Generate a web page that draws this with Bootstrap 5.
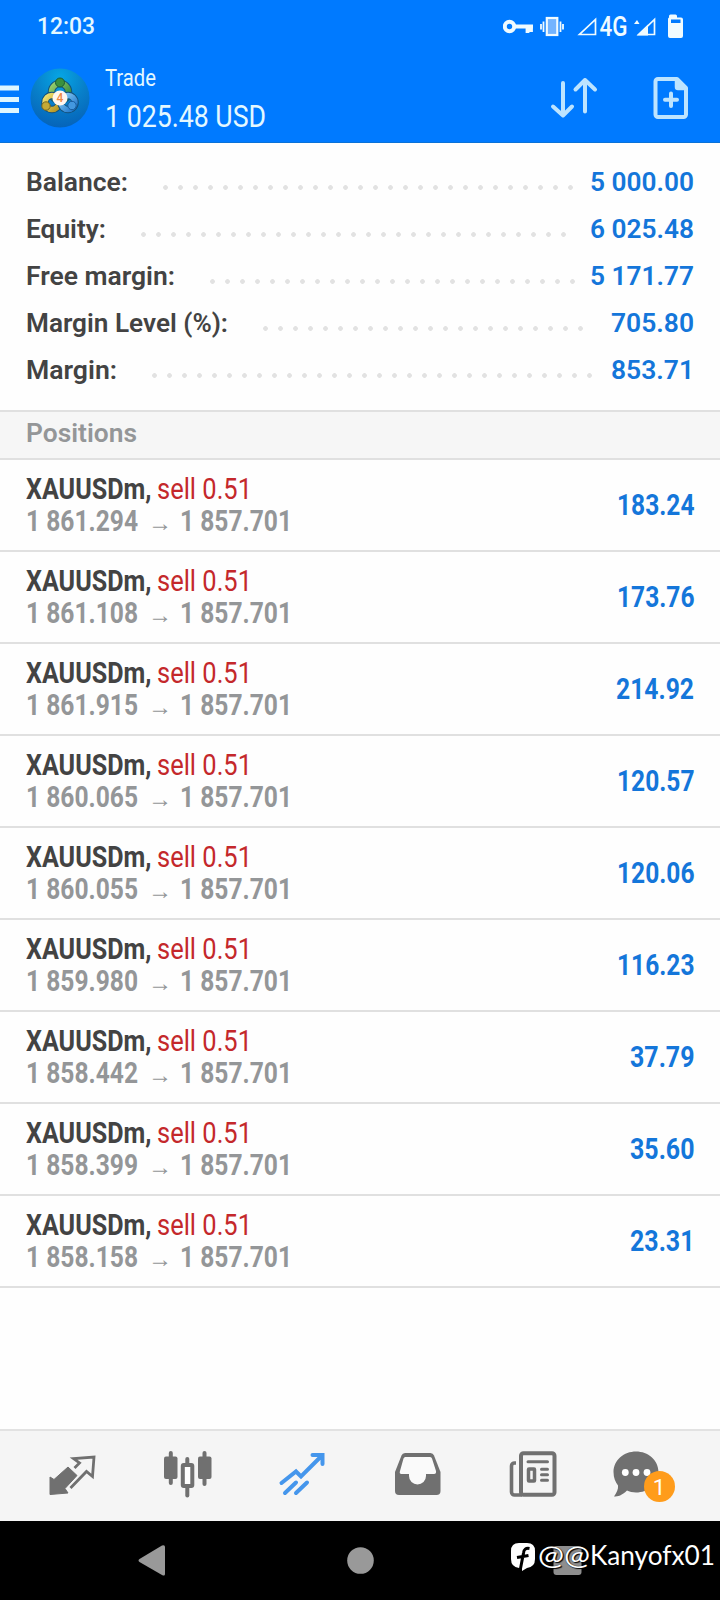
<!DOCTYPE html>
<html lang="en">
<head>
<meta charset="utf-8">
<meta name="viewport" content="width=device-width, initial-scale=1">
<title>Trade</title>
<link href="https://cdn.jsdelivr.net/npm/bootstrap@5.3.0/dist/css/bootstrap.min.css" rel="stylesheet">
<style>
body{font-family:Roboto,sans-serif;background:#fefefe;color:#434343;width:720px;height:1600px;overflow:hidden}
svg{display:block;flex:none}
.top-area{background:#007aff;color:#e4f8ff;height:143px;border-bottom:1px solid #0a72d8}
.status{height:54px}
.clock{font-size:23px;line-height:56px;font-weight:500;margin-left:37px}
.appbar{height:88px}
.fit{display:inline-block;white-space:pre;vertical-align:top}
.fit>span{display:inline-block;transform-origin:0 50%}
.t-title{font-size:24px;line-height:32px;margin-top:7.5px}
.t-sum{font-size:32px;line-height:38px;margin-top:3px}
.summary{padding:16px 26px 0;height:267px}
.summary .line{height:47px;line-height:47px;font-size:26px;font-weight:600}
.blue{color:#1476da}
.dots{height:5px;margin-left:30px;margin-top:10px;background:radial-gradient(circle at 7.5px 2.5px,#e2e2e2 0 2px,transparent 2.7px) 0 0/15px 5px repeat-x}
.section{height:50px;background:#f6f6f6;border-top:2px solid #e0e0e0;border-bottom:2px solid #e0e0e0;color:#949698;font-size:26px;line-height:43px;font-weight:600;padding-left:26px}
.pos{height:92px;border-bottom:2px solid #e0e0e0;padding:13px 26px 0;font-size:29.5px;line-height:32px;font-weight:700}
.pos .sell{color:#c4282b;font-weight:400;margin-left:5.5px}
.pos .price{color:#949698}
.pos .arrow{font-family:"Liberation Sans",sans-serif;font-size:24px;line-height:36px;margin:0 8px 0 10px}
.pos .val{line-height:64px}
.tabs{height:92px;background:#f5f5f5;border-top:2px solid #e2e2e2}
.sys{height:79px;background:#000}
.wm{position:absolute;left:509px;top:1534px;color:#fff;font-family:Lato,sans-serif;font-size:27px;line-height:41px;text-shadow:1px 1px 1px #000,0 0 1px #000}
</style>
</head>
<body class="d-flex flex-column position-relative">
<header class="top-area">
  <div class="status d-flex align-items-center">
    <span class="clock"><span class="fit" data-w="58">12:03</span></span>
    <div class="d-flex align-items-center ms-auto">
      <svg width="217" height="54" viewBox="503 0 217 54" fill="none" stroke="#f0fbff">
        <circle cx="509.5" cy="26.5" r="4.7" stroke-width="4"/>
        <path d="M514 26.5H533M527.5 26.5V33M531 26.5V32" stroke-width="3.8"/>
        <rect x="546.8" y="18" width="10.5" height="17" fill="#73b4ff" stroke-width="2.2"/>
        <path d="M543.5 21.500V32M541 24V29.500M560.500 21.500V32M563 24V29.500" stroke-width="1.800"/>
        <path d="M579.500 34.500H595.500V19.500Z" stroke-width="1.700"/>
        <path d="M639 34.500H654.500V19.500Z" stroke-width="1.700"/>
        <path d="M636.500 35.500H648V24.500ZM634 24H639.500L637 20Z" fill="#f0fbff" stroke="none"/>
        <path d="M669 17.500V16a1.500 1.500 0 0 1 1.500-1.500h5a1.500 1.500 0 0 1 1.500 1.500v1.500h4a2 2 0 0 1 2 2V36a2 2 0 0 1-2 2h-11a2 2 0 0 1-2-2V19.500a2 2 0 0 1 1-2ZM671 19.500V23h9.500v-3.500Z" fill="#f0fbff" stroke="none" fill-rule="evenodd"/>
        <text x="599.500" y="36" font-size="27" font-weight="500" textLength="28" lengthAdjust="spacingAndGlyphs" fill="#f0fbff" stroke="none">4G</text>
      </svg>
    </div>
  </div>
  <div class="appbar d-flex">
    <svg width="105" height="87" viewBox="0 54 105 87">
      <defs>
        <radialGradient id="disc" cx=".5" cy=".15" r=".9"><stop offset="0" stop-color="#06a6e4"/><stop offset=".5" stop-color="#087fc9"/><stop offset="1" stop-color="#0560b8"/></radialGradient>
        <linearGradient id="gg" x2="1" y2="1"><stop stop-color="#9ad06c"/><stop offset="1" stop-color="#25803a"/></linearGradient>
        <linearGradient id="gy" x2="1" y2="1"><stop stop-color="#f0e272"/><stop offset="1" stop-color="#b59320"/></linearGradient>
        <linearGradient id="gb" x2="1" y2="1"><stop stop-color="#8ccff5"/><stop offset="1" stop-color="#1d74cb"/></linearGradient>
      </defs>
      <path d="M0 88H19M0 99.500H19M0 110.500H19" stroke="#def6ff" stroke-width="5"/>
      <circle cx="60" cy="98" r="29.500" fill="url(#disc)"/>
      <g fill="none" stroke-width="5.500">
        <circle cx="60" cy="92" r="8.500" stroke="#14507a" stroke-width="7.500"/>
        <circle cx="60" cy="92" r="8.500" stroke="url(#gg)"/>
        <circle cx="52" cy="102.500" r="7" stroke="#14507a" stroke-width="7.500"/>
        <circle cx="52" cy="102.500" r="7" stroke="url(#gy)"/>
        <circle cx="68" cy="102.500" r="7" stroke="#14507a" stroke-width="7.500"/>
        <circle cx="68" cy="102.500" r="7" stroke="url(#gb)"/>
      </g>
      <circle cx="60" cy="82.500" r="4.500" fill="#3b913f" stroke="#1a5c33"/>
      <circle cx="46" cy="106" r="4.200" fill="#c3a936" stroke="#746621"/>
      <circle cx="72" cy="105.500" r="4.200" fill="#4398df" stroke="#165a9c"/>
      <circle cx="60" cy="98" r="7.500" fill="#fff6ee"/>
      <text x="60" y="102.300" font-size="12" font-weight="500" text-anchor="middle" fill="#ee8844">4</text>
    </svg>
    <div>
      <div class="t-title"><span class="fit" data-w="51">Trade</span></div>
      <div class="t-sum"><span class="fit" data-w="161">1 025.48 USD</span></div>
    </div>
    <svg class="ms-auto" width="170" height="87" viewBox="550 54 170 87" fill="none" stroke="#bde4ff" stroke-width="4" stroke-linecap="round" stroke-linejoin="round">
      <path d="M563 83V115M553 106.500L563 115.500L572 106.500M585 111.500V80M575.500 89.500L585 80L595 89.500"/>
      <path d="M658 79H677L686 88V114.500a2.500 2.500 0 0 1-2.500 2.500H658a2.500 2.500 0 0 1-2.500-2.500V81.500A2.500 2.500 0 0 1 658 79Z"/>
      <path d="M676 79V87q0 2 2 2H686Z" fill="#bde4ff" stroke-width="2.500"/>
      <path d="M671 93.500V106M665 99.700H677"/>
    </svg>
  </div>
</header>

<section class="summary" id="summary"></section>
<div class="section"><span class="fit" data-w="111">Positions</span></div>
<main id="positions"></main>

<nav class="tabs mt-auto">
  <svg width="720" height="90" viewBox="0 1431 720 90" fill="none" stroke="#707070">
    <path d="M50 1477L54 1479.500L68 1467L77 1475.500L65 1488.500L68 1493L50 1494.500Z" fill="#707070" stroke-width="1" stroke-linejoin="round"/>
    <path d="M74.500 1468L79.500 1463L73.500 1458.500L94 1457L92.500 1476.500L86.500 1471.500L70.500 1488" stroke-width="2.800"/>
    <g fill="#707070" stroke="none">
      <rect x="164" y="1456.500" width="13.500" height="22.500" rx="2"/><rect x="198" y="1456.500" width="13.500" height="22.500" rx="2"/>
      <rect x="168.800" y="1451" width="4" height="34" rx="2"/><rect x="202.500" y="1451" width="4" height="35" rx="2"/>
      <rect x="185.300" y="1457" width="4" height="8" rx="2"/><rect x="185.300" y="1486" width="4" height="11.500" rx="2"/>
    </g>
    <rect x="182.800" y="1465" width="9.500" height="21" rx="1" stroke-width="4" fill="#fff"/>
    <path d="M281.500 1483L296 1471.500L301 1476.500L322 1455.500M312.500 1455H322.500V1464M285 1493L296 1482.500M296 1493L307 1482.500" stroke="#4596ec" stroke-width="4" stroke-linecap="round"/>
    <path d="M405 1453H430.500a4 4 0 0 1 3.500 2.500L440.500 1472V1491a4 4 0 0 1-4 4H399a4 4 0 0 1-4-4V1472L401.500 1455.500A4 4 0 0 1 405 1453Z" fill="#707070" stroke="none"/>
    <path d="M405.500 1457H430a2 2 0 0 1 2 1.500L436 1471q0.500 3-2 3H426V1476a8.500 8.500 0 0 1-17 0V1474H401.500q-2.500 0-1.500-3L403.500 1458.500a2 2 0 0 1 2-1.500Z" fill="#fafafa" stroke="none"/>
    <path d="M516 1463H514.500a3 3 0 0 0-3 3V1492a3 3 0 0 0 3 3H522" stroke-width="3.600"/>
    <rect x="521" y="1453.300" width="33.500" height="41.500" rx="2.500" stroke-width="4"/>
    <path d="M528 1461.700H547.500M541.500 1469.300H547.500M541.500 1474.800H547.500M541.500 1480.300H547.500" stroke-width="3" stroke-linecap="round"/>
    <rect x="528.500" y="1469" width="6" height="12" rx=".5" stroke-width="3.500"/>
    <path d="M636 1451.500C648 1451.500 658.500 1460 658.500 1472S648 1492.500 636 1492.500C633 1492.500 629 1491.500 627 1490.500C622 1495.500 618 1496.500 614 1496.500C616.500 1493 618.500 1489 618 1485.500C615.500 1482 613.500 1478 613.500 1472C613.500 1460 624 1451.500 636 1451.500Z" fill="#707070" stroke="none"/>
    <g fill="#fff" stroke="none"><circle cx="625.300" cy="1472.500" r="3.400"/><circle cx="636" cy="1472.500" r="3.400"/><circle cx="647" cy="1472.500" r="3.400"/></g>
    <circle cx="659.500" cy="1486.500" r="15.500" fill="#ff9c1b" stroke="none"/>
    <text x="659" y="1494.500" font-size="22.500" text-anchor="middle" fill="#fff" stroke="none">1</text>
  </svg>
</nav>
<footer class="sys">
  <svg width="720" height="79" viewBox="0 1521 720 79" fill="#999">
    <path d="M139.500 1559L162 1545.500Q165 1544.500 165 1547V1574Q165 1576.500 162 1575L139.500 1562Q137.500 1560.500 139.500 1559Z"/>
    <circle cx="360.500" cy="1560.500" r="13.300"/>
    <rect x="553.500" y="1546" width="28" height="29" rx="3" fill="#8e8e8e"/>
  </svg>
</footer>
<div class="wm d-flex">
  <svg width="29" height="42" viewBox="509 1534 29 42">
    <path d="M519 1543H527Q535 1543 535 1551V1559Q535 1567 527 1568L522 1571V1568H519Q511 1567 511 1559V1551Q511 1543 519 1543Z" fill="#fff"/>
    <path d="M529.500 1548.500Q524 1547.500 523.500 1553L520.500 1568.500M517 1557.500L528.500 1555.500" fill="none" stroke="#000" stroke-width="3"/>
  </svg>
  <span class="fit" data-w="52">@@</span><span class="fit" data-w="125">Kanyofx01</span>
</div>

<script src="https://cdn.jsdelivr.net/npm/bootstrap@5.3.0/dist/js/bootstrap.bundle.min.js"></script>
<script>
// label, label width, value, value width, number of leader dots
const summary = [
  ['Balance:', 102, '5 000.00', 104, 28], ['Equity:', 80, '6 025.48', 104, 29],
  ['Free margin:', 149, '5 171.77', 104, 25], ['Margin Level (%):', 202, '705.80', 83, 22],
  ['Margin:', 91, '853.71', 83, 30]];
document.getElementById('summary').innerHTML = summary.map(([l, lw, v, vw, n]) =>
  `<div class="line d-flex align-items-center"><span class="fit" data-w="${lw}">${l}</span><span class="dots" style="width:${n * 15}px"></span><span class="fit blue ms-auto" data-w="${vw}">${v}</span></div>`).join('');
// open price, profit, profit width
const positions = [
  ['1 861.294', '183.24', 77.5], ['1 861.108', '173.76', 77.5], ['1 861.915', '214.92', 78],
  ['1 860.065', '120.57', 77.5], ['1 860.055', '120.06', 77.5], ['1 859.980', '116.23', 77.5],
  ['1 858.442', '37.79', 64.5], ['1 858.399', '35.60', 64.5], ['1 858.158', '23.31', 64.5]];
document.getElementById('positions').innerHTML = positions.map(([p, v, w]) =>
  `<div class="pos d-flex justify-content-between"><div><div class="d-flex"><span class="fit" data-w="125.500">XAUUSDm,</span><span class="fit sell" data-w="95">sell 0.51</span></div><div class="d-flex price"><span class="fit" data-w="112">${p}</span><span class="fit arrow" data-w="24">→</span><span class="fit" data-w="112">1 857.701</span></div></div><span class="fit val blue" data-w="${w}">${v}</span></div>`).join('');
// condense each text run to its column width
document.querySelectorAll('.fit').forEach(el => {
  const s = document.createElement('span');
  s.textContent = el.textContent;
  el.replaceChildren(s);
  const w = +el.dataset.w;
  const natural = s.getBoundingClientRect().width;
  s.style.transform = `scaleX(${w / natural})`;
  el.style.width = w + 'px';
});
</script>
</body>
</html>
